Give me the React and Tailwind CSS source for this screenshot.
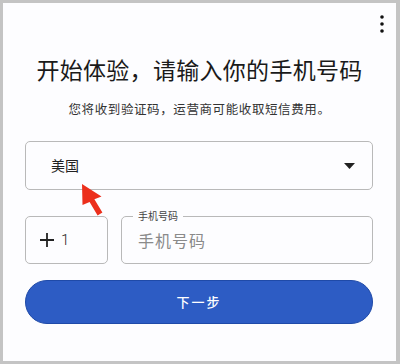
import { useState } from 'react'

const cjk = { fontFamily: '"Noto Sans CJK SC", "Noto Sans", sans-serif' }

function Kebab() {
  return (
    <svg width="6" height="20" viewBox="0 0 6 20" className="text-[#111]">
      <circle cx="3" cy="3" r="1.8" fill="currentColor" />
      <circle cx="3" cy="10" r="1.8" fill="currentColor" />
      <circle cx="3" cy="17" r="1.8" fill="currentColor" />
    </svg>
  )
}

function Pointer() {
  return (
    <svg
      width="28"
      height="38"
      viewBox="0 0 28 38"
      className="pointer-events-none absolute left-[76px] top-[178px]"
    >
      <polygon
        points="3,3 22.5,15.5 15.4,18.3 23.4,31.6 18.6,34.4 10.6,21.1 3.5,24"
        fill="#ec2f1c"
      />
    </svg>
  )
}

export default function App() {
  const [phone, setPhone] = useState('')

  return (
    <div
      style={cjk}
      className="relative flex h-[364px] w-[400px] flex-col border-t-[3px] border-r-4 border-b-[3px] border-l-[3px] border-[#c4c4c4] bg-[#fdfdff]"
    >
      <div className="flex justify-end pt-[11px] pr-[11px]">
        <Kebab />
      </div>

      <div className="mt-[19px] text-center text-[23px] leading-[32px] tracking-[0.3px] text-[#1a1a1a]">
        开始体验，请输入你的手机号码
      </div>
      <div className="mt-[14px] text-center text-[12.5px] leading-[20px] tracking-[0.6px] text-[#333]">
        您将收到验证码，运营商可能收取短信费用。
      </div>

      <div className="flex flex-col pr-[23px] pl-[22px]">
        <div className="mt-[22px] flex h-[49px] items-center justify-between rounded-[5px] border border-[#b9b9b9] pr-[17px] pl-[25px]">
          <span className="text-[14px] text-[#222]">美国</span>
          <svg width="11" height="6" viewBox="0 0 11 6">
            <polygon points="0,0 11,0 5.5,6" fill="#222" />
          </svg>
        </div>

        <div className="mt-[26px] flex gap-[13px]">
          <div className="flex h-[48px] w-[83px] items-center gap-[7px] rounded-[5px] border border-[#b9b9b9] pl-[14px] text-[#222]">
            <svg width="14" height="14" viewBox="0 0 14 14">
              <path d="M7 0v14M0 7h14" stroke="#222" strokeWidth="1.8" />
            </svg>
            <span className="text-[15px] font-light" style={{ fontFamily: 'Roboto, sans-serif' }}>1</span>
          </div>
          <div className="relative flex h-[48px] flex-1 items-center rounded-[5px] border border-[#b9b9b9] pl-[16px]">
            <span className="absolute -top-[8px] left-[11px] bg-[#fdfdff] px-[5px] text-[10px] leading-[14px] text-[#444]">
              手机号码
            </span>
            <input
              value={phone}
              onChange={(e) => setPhone(e.target.value)}
              placeholder="手机号码"
              className="w-full bg-transparent text-[16px] tracking-[1px] text-[#222] outline-none placeholder:text-[#8a8a8a]"
            />
          </div>
        </div>

        <button className="mt-[16px] h-[44px] rounded-full border border-[#1f4aa8] bg-[#2d5cc4] text-[13px] font-medium tracking-[2px] text-white">
          下一步
        </button>
      </div>

      <Pointer />
    </div>
  )
}
